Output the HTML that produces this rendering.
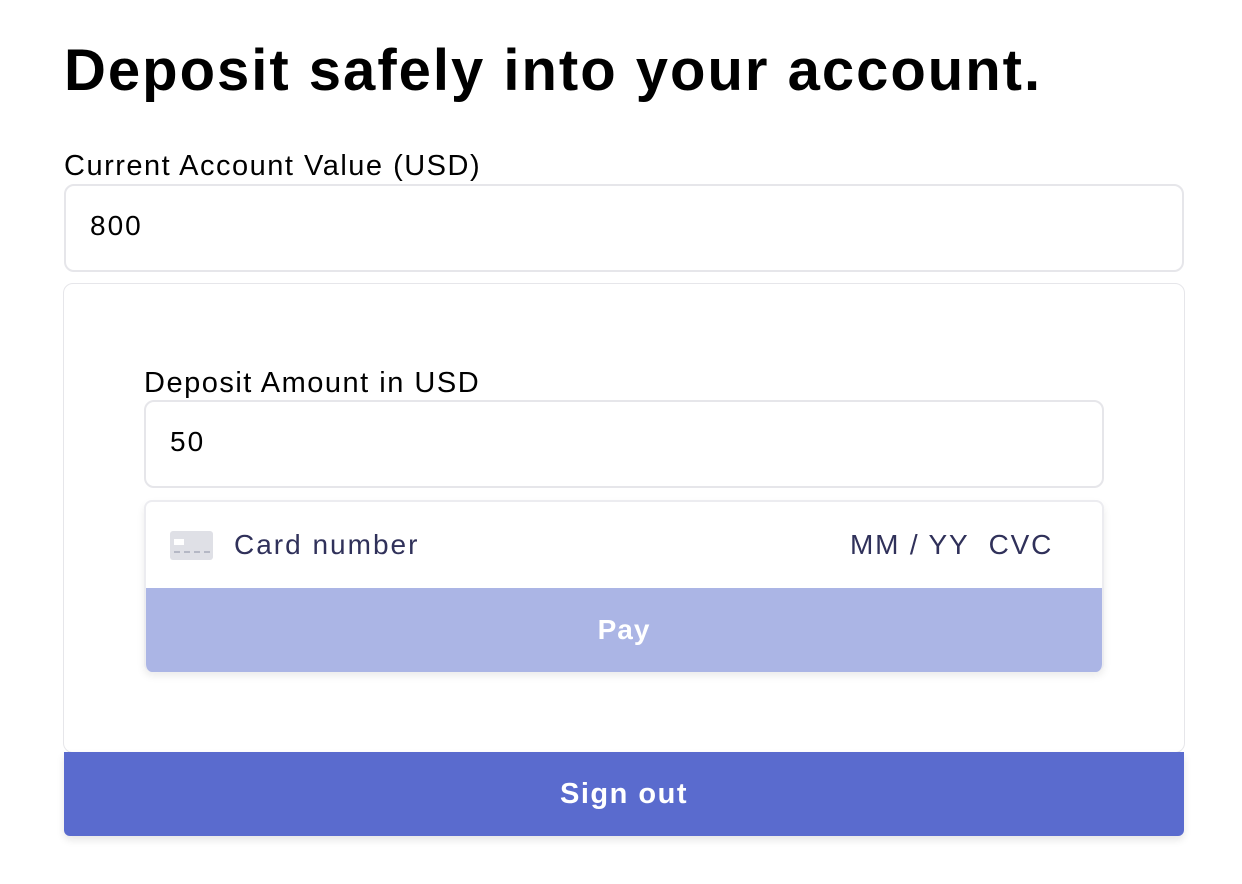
<!DOCTYPE html>
<html><head><style>
body{margin:0;background:#fff;font-family:"Liberation Sans",sans-serif;width:1242px;height:884px;position:relative;overflow:hidden}
.a{position:absolute}
h1{position:absolute;left:64px;top:37px;margin:0;font-size:58px;font-weight:bold;color:#000;letter-spacing:2px}
.lbl{font-size:29px;color:#000;letter-spacing:1.5px}
.box{border:2px solid #e6e6ea;border-radius:10px;box-sizing:border-box;background:#fff}
.val{font-size:28px;color:#000;letter-spacing:2px}
</style></head><body>
<h1>Deposit safely into your account.</h1>
<div class="a lbl" style="left:64px;top:150px">Current Account Value (USD)</div>
<div class="a box" style="left:64px;top:184px;width:1120px;height:88px"></div>
<div class="a val" style="left:90px;top:210px">800</div>
<div class="a box" style="left:63px;top:283px;width:1122px;height:470px;border-width:1px"></div>
<div class="a lbl" style="left:144px;top:367px">Deposit Amount in USD</div>
<div class="a box" style="left:144px;top:400px;width:960px;height:88px"></div>
<div class="a val" style="left:170px;top:426px">50</div>
<div class="a" style="left:144px;top:500px;width:960px;height:172px;border-radius:8px;box-shadow:0 4px 8px rgba(0,0,0,0.08);overflow:hidden;border:2px solid #ececf0;border-bottom:none;box-sizing:border-box">
<div class="a" style="left:-2px;top:86px;width:960px;height:86px;background:#abb5e5;color:#fff;font-weight:bold;font-size:28px;text-align:center;line-height:84px;letter-spacing:1px">Pay</div>
</div>
<div class="a" style="left:170px;top:531px;width:43px;height:29px;background:#dfe0e6;border-radius:3px"></div>
<div class="a" style="left:174px;top:539px;width:10px;height:6px;background:#fff"></div>
<div class="a" style="left:174px;top:551px;width:36px;height:0;border-top:2px dashed #b5b8c5"></div>
<div class="a" style="left:234px;top:529px;font-size:28px;color:#30315a;letter-spacing:2px">Card number</div>
<div class="a" style="left:850px;top:529px;font-size:28px;color:#30315a;letter-spacing:1.8px">MM / YY&nbsp; CVC</div>
<div class="a" style="left:64px;top:752px;width:1120px;height:84px;background:#5a6bce;border-radius:0 0 6px 6px;box-shadow:0 4px 8px rgba(0,0,0,0.1);color:#fff;font-weight:bold;font-size:29px;text-align:center;line-height:84px;letter-spacing:1.5px">Sign out</div>
</body></html>
